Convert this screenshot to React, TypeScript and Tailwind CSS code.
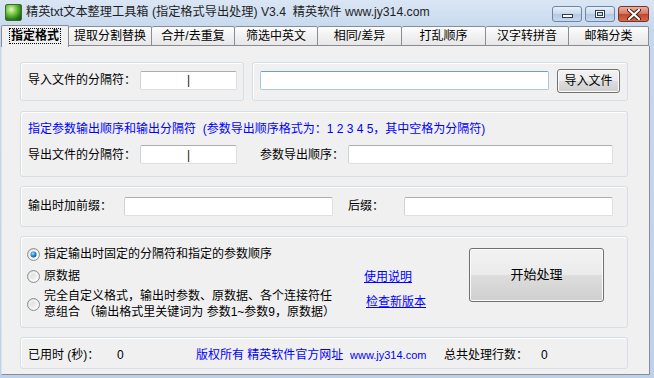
import React from "react";

const font = { fontFamily: "'Liberation Sans', 'Noto Sans CJK SC', sans-serif" };

function TextBox({ w, value, blue }: { w: string; value?: string; blue?: boolean }) {
  return (
    <div
      className={`${w} h-[19px] bg-white rounded-[2px] border flex items-center justify-center text-[12px] leading-none text-[#111111] ${
        blue ? "border-[#a9c8e2] border-t-[#6f9dc6]" : "border-[#dbdfe6] border-t-[#abadb3] border-l-[#d0d3d9]"
      }`}
    >
      {value}
    </div>
  );
}

function Group({ className, children }: { className?: string; children: React.ReactNode }) {
  return (
    <div className={`border border-[#d5dfe5] rounded-[3px] shadow-[inset_1px_1px_0_#ffffff] ${className ?? ""}`}>
      {children}
    </div>
  );
}

function Radio({ checked }: { checked?: boolean }) {
  return (
    <svg width="13" height="13" viewBox="0 0 13 13" className="shrink-0">
      <defs>
        <linearGradient id="rg" x1="0" y1="0" x2="1" y2="1">
          <stop offset="0" stopColor="#d5d5d5" />
          <stop offset="1" stopColor="#fbfbfb" />
        </linearGradient>
        <radialGradient id="rd" cx="0.4" cy="0.35" r="0.7">
          <stop offset="0" stopColor="#a9e3ff" />
          <stop offset="0.5" stopColor="#2c8fd8" />
          <stop offset="1" stopColor="#0c4f98" />
        </radialGradient>
      </defs>
      <circle cx="6.5" cy="6.5" r="6" fill="url(#rg)" stroke="#8f8f8f" />
      <circle cx="6.5" cy="6.5" r="4" fill="none" stroke="#ffffff" strokeWidth="0.8" />
      {checked && <circle cx="6.5" cy="6.5" r="3" fill="url(#rd)" />}
    </svg>
  );
}

function WinButton({ className, children }: { className?: string; children: React.ReactNode }) {
  return (
    <div className={`h-[16px] rounded-[3px] border flex items-center justify-center ${className ?? ""}`}>{children}</div>
  );
}

function PushButton({ className, children }: { className?: string; children: React.ReactNode }) {
  return (
    <div
      className={`rounded-[3px] border border-[#707070] flex items-center justify-center text-[12px] bg-[linear-gradient(#f2f2f2,#ebebeb_50%,#dddddd_50%,#cfcfcf)] shadow-[inset_0_0_0_1px_#fcfcfc] ${className ?? ""}`}
    >
      {children}
    </div>
  );
}

const tabs = ["提取分割替换", "合并/去重复", "筛选中英文", "相同/差异", "打乱顺序", "汉字转拼音", "邮箱分类"];
const tabWidths = ["w-[83px]", "w-[83px]", "w-[83px]", "w-[84px]", "w-[84px]", "w-[83px]", "w-[80px]"];

export default function App() {
  return (
    <div
      className="w-[654px] h-[378px] overflow-hidden flex flex-col bg-[linear-gradient(#dae6f4,#c6d8ee_30px,#bcd2ec)] text-black"
      style={font}
    >
      {/* title bar */}
      <div className="h-[24px] flex items-center shrink-0">
        <div className="ml-[5px] w-[17px] h-[17px] rounded-[2px] border border-[#3d6b2a] bg-[radial-gradient(circle_at_35%_30%,#e0f8c0,#6cbf3a_40%,#2b7a1c_70%,#174a10)]" />
        <div className="ml-[4px] text-[12.2px] leading-none whitespace-pre text-[#1e1e1e]">
          精英txt文本整理工具箱 (指定格式导出处理) V3.4  精英软件 www.jy314.com
        </div>
        <div className="ml-auto mr-[5px] mt-[4px] flex gap-[3px]">
          <WinButton className="w-[30px] border-[#6d86a7] bg-[linear-gradient(#e8eff8,#c9d9ec_50%,#b3c8e2_50%,#c8d9ee)]">
            <div className="w-[11px] h-[4px] bg-white border border-[#2f3d52] mt-[4px]" />
          </WinButton>
          <WinButton className="w-[30px] border-[#6d86a7] bg-[linear-gradient(#e8eff8,#c9d9ec_50%,#b3c8e2_50%,#c8d9ee)]">
            <div className="w-[10px] h-[8px] border border-[#2f3d52] bg-white flex items-center justify-center">
              <div className="w-[6px] h-[4px] border border-[#2f3d52] bg-[#c9d9ec]" />
            </div>
          </WinButton>
          <WinButton className="w-[31px] border-[#7a3326] bg-[linear-gradient(#eab0a2,#d7715e_50%,#c2442c_50%,#d46a4c)]">
            <svg width="14" height="11" viewBox="0 0 14 11">
              <path d="M2 1 L12 10 M12 1 L2 10" stroke="#3a1a12" strokeWidth="4" strokeLinecap="round" />
              <path d="M2 1 L12 10 M12 1 L2 10" stroke="#ffffff" strokeWidth="2.2" strokeLinecap="round" />
            </svg>
          </WinButton>
        </div>
      </div>

      {/* tabs */}
      <div className="h-[22px] flex items-end shrink-0 pl-[1px]">
        <div className="w-[68px] h-[22px] bg-[#f0f0f0] border-t border-l border-r border-[#898c95] rounded-t-[2px] flex items-center justify-center relative z-10 -mb-px pb-px">
          <div className="px-[1px] border border-dotted border-black text-[12px] font-bold leading-[14px]">指定格式</div>
        </div>
        {tabs.map((t, i) => (
          <div
            key={t}
            className={`${tabWidths[i]} h-[20px] border-t border-r border-b border-[#898c95] rounded-t-[2px] bg-[linear-gradient(#fdfdfd,#f1f1f1_50%,#e7e7e7)] flex items-center justify-center text-[12px] leading-none`}
          >
            {t}
          </div>
        ))}
      </div>

      {/* panel */}
      <div className="flex-1 ml-[1px] mr-[4px] mb-[3px] bg-[#f0f0f0] border-l border-r border-b border-[#898c95] border-l-[#dfe3e8] pl-[18px] pr-[21px] pt-[16px] text-[12px] leading-[14px]">
        <div className="flex gap-[8px]">
          <Group className="w-[224px] h-[39px] flex items-center pl-[7px] pb-[3px]">
            <div className="w-[112px]">导入文件的分隔符：</div>
            <TextBox w="w-[97px]" value="|" />
          </Group>
          <Group className="flex-1 h-[39px] flex items-center pl-[7px] pb-[3px]">
            <TextBox w="w-[289px]" blue />
            <PushButton className="ml-[8px] w-[63px] h-[24px] mt-[2px]">导入文件</PushButton>
          </Group>
        </div>

        <Group className="mt-[10px] h-[66px] pl-[7px] pt-[10px]">
          <div className="text-[#0000ff] whitespace-pre">
            指定参数输出顺序和输出分隔符  (参数导出顺序格式为：1 2 3 4 5，其中空格为分隔符)
          </div>
          <div className="mt-[9px] flex items-center">
            <div className="w-[112px]">导出文件的分隔符：</div>
            <TextBox w="w-[97px]" value="|" />
            <div className="ml-[23px] w-[88px]">参数导出顺序：</div>
            <TextBox w="w-[265px]" />
          </div>
        </Group>

        <Group className="mt-[9px] h-[41px] flex items-center pl-[7px] pb-[1px]">
          <div className="w-[96px]">输出时加前缀：</div>
          <TextBox w="w-[209px]" />
          <div className="ml-[15px] w-[56px]">后缀：</div>
          <TextBox w="w-[209px]" />
        </Group>

        <Group className="mt-[9px] h-[92px] flex pl-[6px]">
          <div className="w-[337px] pt-[10px] flex flex-col">
            <div className="flex items-center gap-[4px]">
              <Radio checked />
              <span>指定输出时固定的分隔符和指定的参数顺序</span>
            </div>
            <div className="mt-[8px] flex items-center gap-[4px]">
              <Radio />
              <span>原数据</span>
            </div>
            <div className="mt-[5px] flex items-center gap-[4px]">
              <Radio />
              <span className="leading-[16px] whitespace-pre">
                完全自定义格式，输出时参数、原数据、各个连接符任{"\n"}意组合 （输出格式里关键词为 参数1~参数9，原数据）
              </span>
            </div>
          </div>
          <div className="w-[105px] pt-[33px] flex flex-col items-start">
            <span className="text-[#0000ff] underline">使用说明</span>
            <span className="mt-[11px] ml-[2px] text-[#0000ff] underline">检查新版本</span>
          </div>
          <PushButton className="mt-[11px] w-[135px] h-[54px] text-[13px]">开始处理</PushButton>
        </Group>

        <Group className="mt-[9px] h-[32px] flex items-center pl-[7px] pt-[4px]">
          <div className="w-[89px]">已用时 (秒)：</div>
          <div className="w-[79px]">0</div>
          <div className="w-[154px] text-[#0000ff]">版权所有 精英软件官方网址</div>
          <div className="w-[94px] text-[#0000ff] text-[11px]">www.jy314.com</div>
          <div className="w-[97px]">总共处理行数：</div>
          <div>0</div>
        </Group>
      </div>
    </div>
  );
}
